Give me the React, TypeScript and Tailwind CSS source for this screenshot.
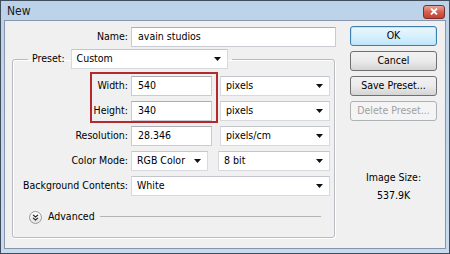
const font = "font-['DejaVu_Sans_Condensed','DejaVu_Sans',sans-serif]";

function Arrow() {
  return (
    <svg width="7" height="4" viewBox="0 0 7 4" className="shrink-0">
      <polygon points="0,0 7,0 3.5,4" fill="#111" />
    </svg>
  );
}

function TextBox({ value, className }: { value: string; className: string }) {
  return (
    <div
      className={
        "flex h-[20px] items-center border border-[#c9ccd3] border-t-[#abadb3] bg-white pl-[6px] text-black " +
        className
      }>
      {value}
    </div>
  );
}

function Combo({ value, className }: { value: string; className: string }) {
  return (
    <div
      className={
        "flex h-[20px] items-center justify-between border border-[#d6d9de] border-t-[#c3c6cc] bg-white pl-[5px] pr-[6px] text-black " +
        className
      }>
      <span>{value}</span>
      <Arrow />
    </div>
  );
}

function Row({
  label,
  children,
  labelWidth = "w-[105px]",
}: {
  label: string;
  children: React.ReactNode;
  labelWidth?: string;
}) {
  return (
    <div className="flex h-[20px] items-center">
      <div className={"shrink-0 text-right " + labelWidth}>{label}</div>
      <div className="ml-[3px] flex items-center">{children}</div>
    </div>
  );
}

function Button({
  label,
  primary,
  disabled,
}: {
  label: string;
  primary?: boolean;
  disabled?: boolean;
}) {
  let cls =
    "border-[#707070] bg-gradient-to-b from-[#f2f2f2] via-[#ebebeb] to-[#d4d4d4] text-black";
  if (primary)
    cls =
      "border-[#3c7fb1] bg-gradient-to-b from-[#eaf6fd] via-[#d9f0fc] to-[#bee6fd] text-black shadow-[inset_0_0_0_1px_#bfe4f7]";
  if (disabled) cls = "border-[#adb2b5] bg-[#f4f4f4] text-[#a0a0a0]";
  return (
    <div
      className={
        "flex h-[20px] items-center justify-center rounded-[3px] border " + cls
      }>
      {label}
    </div>
  );
}

export default function App() {
  return (
    <div
      className={
        "flex h-[254px] w-[450px] flex-col border border-[#3f4d5c] bg-gradient-to-b from-[#bcd2e8] to-[#c9dbee] text-[10.5px] text-black " +
        font
      }>
      {/* title bar */}
      <div className="flex h-[19px] items-center justify-between pl-[6px] pr-[4px]">
        <span className="text-[12px] text-[#1a1a1a]">New</span>
        <div className="mt-[2px] flex h-[14px] w-[22px] items-center justify-center rounded-[3px] border border-[#7a2f2f] bg-gradient-to-b from-[#e8a59a] via-[#d25f4e] to-[#c4412e]">
          <svg width="8" height="7" viewBox="0 0 8 7">
            <path d="M1 0.5 L7 6.5 M7 0.5 L1 6.5" stroke="#fff" strokeWidth="1.8" />
          </svg>
        </div>
      </div>

      <div className="mx-[3px] mb-[4px] flex flex-1 border border-[#8596ad] bg-[#f0f0f0]">
        {/* left side */}
        <div className="ml-[7px] flex w-[329px] flex-col pt-[6px]">
          <Row label="Name:" labelWidth="w-[116px]">
            <TextBox value="avain studios" className="w-[205px]" />
          </Row>

          <fieldset className="mt-[2px] w-[323px] rounded-[3px] border border-[#b8bcc0] pb-[14px] pl-[10px] pr-[3px] pt-[3px] shadow-[inset_1px_1px_0_#fff,1px_1px_0_#fff]">
            <legend className="ml-[5px] px-[4px]">
              <div className="flex h-[20px] items-center">
                <span>Preset:</span>
                <Combo value="Custom" className="ml-[6px] w-[157px]" />
              </div>
            </legend>

            <div className="flex">
              <div className="ml-[67px] flex flex-col gap-[5px] border-2 border-[#b3292e] pb-0 pl-0 pr-[4px] pt-[2px]">
                <Row label="Width:" labelWidth="w-[36px]">
                  <TextBox value="540" className="w-[81px]" />
                </Row>
                <Row label="Height:" labelWidth="w-[36px]">
                  <TextBox value="340" className="w-[81px]" />
                </Row>
              </div>
              <div className="ml-[2px] flex flex-col gap-[5px] pt-[4px]">
                <Combo value="pixels" className="w-[110px]" />
                <Combo value="pixels" className="w-[110px]" />
              </div>
            </div>

            <div className="mt-[3px] flex flex-col gap-[5px]">
              <Row label="Resolution:">
                <TextBox value="28.346" className="w-[81px]" />
                <Combo value="pixels/cm" className="ml-[8px] w-[110px]" />
              </Row>
              <Row label="Color Mode:">
                <Combo value="RGB Color" className="w-[77px]" />
                <Combo value="8 bit" className="ml-[10px] w-[112px]" />
              </Row>
              <Row label="Background Contents:">
                <Combo value="White" className="w-[199px]" />
              </Row>
            </div>

            <div className="mt-[15px] flex h-[12px] items-center">
              <div className="ml-[6px] flex h-[13px] w-[13px] items-center justify-center rounded-full border border-[#9a9a9a] bg-gradient-to-b from-white to-[#e2e2e2]">
                <svg width="7" height="7" viewBox="0 0 7 7">
                  <path d="M1 0.8 L3.5 3 L6 0.8 M1 3.8 L3.5 6 L6 3.8" stroke="#222" strokeWidth="1.1" fill="none" />
                </svg>
              </div>
              <span className="ml-[6px]">Advanced</span>
              <div className="ml-[5px] mr-[10px] h-[2px] flex-1 border-t border-[#b4b4b4] border-b-white" />
            </div>
          </fieldset>
        </div>

        {/* right side */}
        <div className="ml-[9px] flex w-[87px] flex-col pt-[5px]">
          <div className="flex flex-col gap-[5px]">
            <Button label="OK" primary />
            <Button label="Cancel" />
            <Button label="Save Preset..." />
            <Button label="Delete Preset..." disabled />
          </div>
          <div className="mt-[50px] text-center leading-[13px]">Image Size:</div>
          <div className="mt-[5px] text-center leading-[13px]">537.9K</div>
        </div>
      </div>
    </div>
  );
}
